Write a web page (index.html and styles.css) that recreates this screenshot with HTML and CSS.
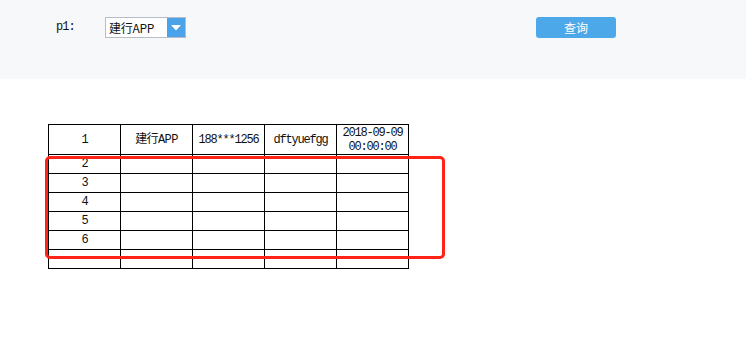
FILE: index.html
```html
<!DOCTYPE html>
<html>
<head>
<meta charset="utf-8">
<link rel="stylesheet" href="styles.css">
</head>
<body>
<div class="toolbar">
  <span class="label">p1:</span>
  <div class="combo">
    <span class="combo-text">建行APP</span>
    <span class="combo-btn"><svg width="10" height="6" viewBox="0 0 10 6"><path d="M0 0H10L5 5.5Z" fill="#fff"/></svg></span>
  </div>
  <button class="query">查询</button>
</div>
<div class="content">
  <table class="grid">
    <tr class="head">
      <td>1</td><td class="cjk">建行APP</td><td>188***1256</td><td>dftyuefgg</td><td>2018-09-09<br>00:00:00</td>
    </tr>
    <tr><td>2</td><td></td><td></td><td></td><td></td></tr>
    <tr><td>3</td><td></td><td></td><td></td><td></td></tr>
    <tr><td>4</td><td></td><td></td><td></td><td></td></tr>
    <tr><td>5</td><td></td><td></td><td></td><td></td></tr>
    <tr><td>6</td><td></td><td></td><td></td><td></td></tr>
    <tr><td></td><td></td><td></td><td></td><td></td></tr>
  </table>
  <div class="highlight"></div>
</div>
</body>
</html>
```
FILE: styles.css
```css
html, body {
  margin: 0;
  padding: 0;
  background: #fff;
}
.toolbar {
  height: 79px;
  background: #f7f8fa;
  display: flex;
  align-items: flex-start;
  padding-top: 17px;
  box-sizing: border-box;
}
.label {
  margin-left: 56px;
  margin-top: 3px;
  font-family: "Liberation Mono", monospace;
  font-size: 12px;
  letter-spacing: -1px;
  color: #111;
  width: 49px;
}
.combo {
  display: flex;
  width: 81px;
  height: 21px;
  box-sizing: border-box;
  border: 1px solid #b7bcc6;
  background: #fff;
}
.combo-text {
  flex: 1;
  font-family: "Noto Sans CJK SC", sans-serif;
  font-size: 12px;
  line-height: 19px;
  padding-left: 3px;
  color: #111;
  letter-spacing: -0.3px;
}
.combo-btn {
  width: 18px;
  background: #4aa3e8;
  display: flex;
  align-items: center;
  justify-content: center;
}
.combo-btn svg {
  margin-top: 1px;
}
.query {
  margin-left: 350px;
  width: 80px;
  height: 21px;
  border: none;
  border-radius: 3px;
  background: #4da8ea;
  color: #fff;
  font-family: "Noto Sans CJK SC", sans-serif;
  font-size: 12px;
  line-height: 21px;
  padding: 0;
}
.content {
  position: relative;
  padding: 45px 0 0 48px;
}
.grid {
  border-collapse: collapse;
  table-layout: fixed;
  width: 361px;
}
.grid td {
  border: 1px solid #000;
  padding: 0;
  text-align: center;
  font-family: "Liberation Mono", monospace;
  font-size: 12px;
  letter-spacing: -1.2px;
  line-height: 14px;
  color: #111;
  height: 18px;
}
.grid .head td {
  height: 29px;
}
.grid td.cjk {
  font-family: "Liberation Mono", "Noto Sans CJK SC", monospace;
  letter-spacing: -0.6px;
}
.highlight {
  position: absolute;
  left: 45px;
  top: 77px;
  width: 400px;
  height: 103px;
  box-sizing: border-box;
  border: 3.5px solid #ff2417;
  border-radius: 5px;
}
```
